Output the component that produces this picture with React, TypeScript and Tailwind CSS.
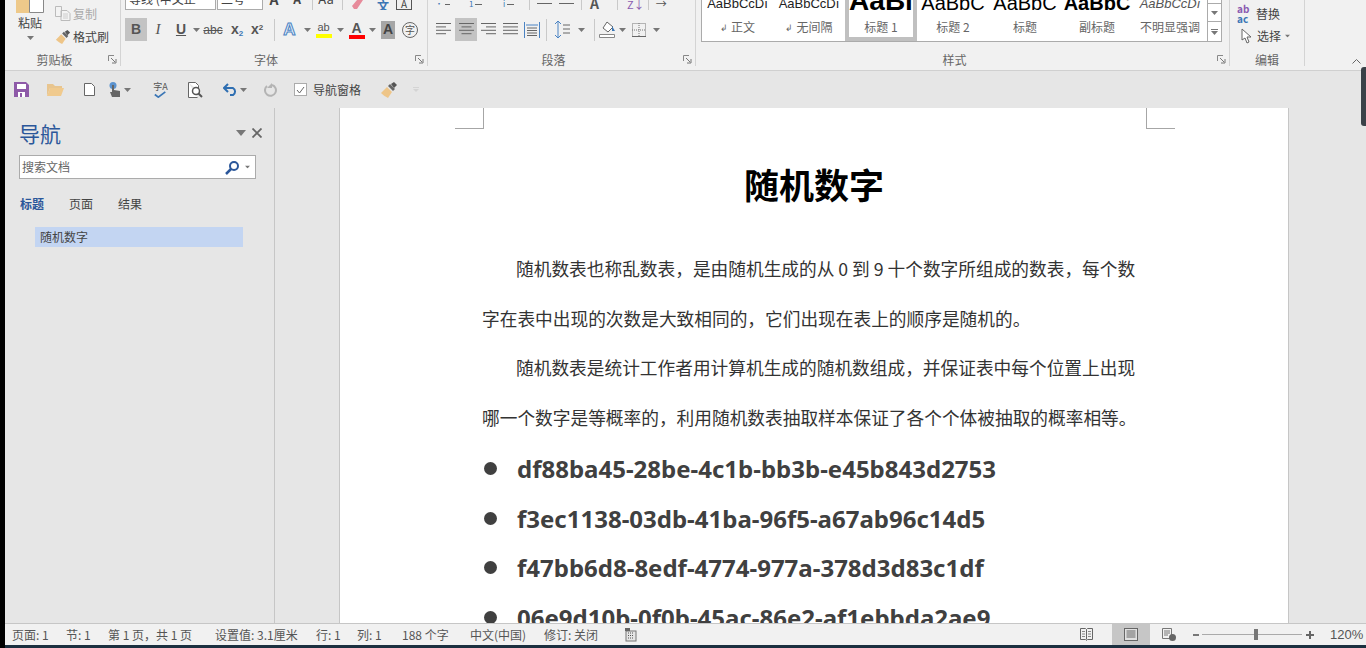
import type { ReactNode } from "react";

const cjk = { fontFamily: '"Noto Sans CJK SC", "Noto Sans", sans-serif' };

function Caret({ className = "" }: { className?: string }) {
  return (
    <svg width="7" height="4" viewBox="0 0 7 4" className={`flex-none ${className}`}>
      <path d="M0 0h7L3.5 4z" fill="#777" />
    </svg>
  );
}

function Launcher() {
  return (
    <svg width="9" height="9" viewBox="0 0 9 9" className="absolute right-[3px] bottom-[2px]">
      <path d="M.5 6V.5H6" fill="none" stroke="#888" />
      <path d="M3 3l4 4M8 4v4H4" fill="none" stroke="#777" />
    </svg>
  );
}

function Group({ width, label, launcher = true, children }: { width: string; label: string; launcher?: boolean; children: ReactNode }) {
  return (
    <div className={`flex h-[66px] flex-none flex-col border-r border-[#d4d4d4] ${width}`}>
      <div className="h-[51px] overflow-hidden">{children}</div>
      <div className={`relative flex h-[15px] items-center justify-center pt-[2px] text-[12px] leading-none text-[#666] ${launcher ? "pr-[16px]" : ""}`}>
        {label}
        {launcher && <Launcher />}
      </div>
    </div>
  );
}

function Sep({ className = "" }: { className?: string }) {
  return <div className={`h-[22px] w-px flex-none bg-[#c9c9c9] ${className}`} />;
}

function Brush({ size = 18 }: { size?: number }) {
  return (
    <svg width={size} height={size} viewBox="0 0 18 18">
      <path d="M1 12l6-6 5 5-4 6c-2-1-5-3-7-5z" fill="#eec588" />
      <path d="M8 5l2-2 5 5-2 2z" fill="#666" />
      <path d="M11 3l3-2 3 3-3 3z" fill="#555" />
    </svg>
  );
}

function AlignIcon({ widths, align }: { widths: number[]; align: "l" | "c" | "r" }) {
  return (
    <svg width="15" height="13" viewBox="0 0 15 13">
      {widths.map((w, i) => {
        const x = align === "l" ? 0 : align === "c" ? (15 - w) / 2 : 15 - w;
        return <rect key={i} x={x} y={i * 3.4} width={w} height="1" fill="#666" />;
      })}
    </svg>
  );
}

function Cell({ w, active, children }: { w: string; active?: boolean; children: ReactNode }) {
  return (
    <div className={`flex h-[23px] flex-none items-center justify-center ${w} ${active ? "bg-[#c3c3c3]" : ""}`}>
      {children}
    </div>
  );
}

function ClipboardGroup() {
  return (
    <Group width="w-[116px]" label="剪贴板">
      <div className="flex h-[51px]">
        <div className="flex w-[50px] flex-none flex-col items-center">
          <svg width="30" height="13" viewBox="0 0 30 13" className="flex-none">
            <rect x="1" y="0" width="13" height="13" fill="#eec98a" />
            <path d="M14.500 -2V12.500H28.500V-2" fill="#fff" stroke="#888" />
          </svg>
          <div className="mt-[2px] text-[12px] leading-[16px] text-[#444]">粘贴</div>
          <Caret className="mt-[5px]" />
        </div>
        <div className="flex flex-col pt-[5px]">
          <div className="flex h-[17px] items-center text-[12px] text-[#aaa]">
            <svg width="16" height="15" viewBox="0 0 16 15" className="mr-[2px]">
              <path d="M.5 .5h6v10h-6zM6 4.500h6l3 3v7H6z" fill="#f3f3f3" stroke="#bbb" />
              <path d="M8 8h5M8 10h5M8 12h5" stroke="#ccc" />
            </svg>
            复制
          </div>
          <div className="mt-[6px] flex h-[17px] items-center text-[12px] text-[#444]">
            <span className="mr-[2px] flex"><Brush size={16} /></span>
            格式刷
          </div>
        </div>
      </div>
    </Group>
  );
}

function FontGroup() {
  return (
    <Group width="w-[307px]" label="字体">
      <div className="flex h-[10px] items-end overflow-hidden pl-[4px] text-[12px] text-[#444]">
        <div className="flex h-[22px] w-[91px] flex-none items-center border border-[#ababab] bg-white pl-[3px] leading-none">等线 (中文正</div>
        <div className="ml-[1px] flex h-[22px] w-[46px] flex-none items-center border border-[#ababab] bg-white pl-[3px] leading-none">二号</div>
        <div className="ml-[3px] flex h-[22px] w-[16px] items-center justify-center font-bold text-[14px]">A</div>
        <div className="ml-[7px] flex h-[22px] w-[16px] items-center justify-center font-bold text-[12px]">A</div>
        <Sep className="ml-[7px]" />
        <div className="ml-[1px] flex h-[22px] w-[24px] items-center justify-center text-[13px]">Aa</div>
        <Sep className="ml-[4px]" />
        <svg width="16" height="10" viewBox="0 0 16 10" className="ml-[8px] flex-none">
          <path d="M1 6l5-6h6l-6 9H3z" fill="#e78b9b" />
        </svg>
        <div className="ml-[8px] w-[16px] text-center font-bold leading-[8px] text-[#3b76b5]">文</div>
        <div className="ml-[5px] h-[10px] w-[16px] border-x border-b border-[#555] text-center text-[10px] leading-[8px]">A</div>
      </div>
      <div className="mt-[8px] flex items-center pl-[4px] text-[#555]" style={{ fontFamily: '"Liberation Sans", sans-serif' }}>
        <Cell w="w-[22px]" active><span className="text-[14px] font-bold">B</span></Cell>
        <Cell w="w-[22px]"><span className="font-['Liberation_Serif'] text-[15px] italic">I</span></Cell>
        <Cell w="w-[24px]"><span className="text-[14px] font-bold underline">U</span></Cell>
        <Caret />
        <Cell w="w-[26px]"><span className="text-[12px] line-through">abc</span></Cell>
        <Cell w="w-[22px]"><span className="text-[14px] font-bold">x<sub className="text-[8px] text-[#3b76b5]">2</sub></span></Cell>
        <Cell w="w-[18px]"><span className="text-[14px] font-bold">x<sup className="text-[8px]">2</sup></span></Cell>
        <Sep className="ml-[8px]" />
        <Cell w="w-[29px]"><span className="text-[17px] font-bold text-[#e8f0fa] [-webkit-text-stroke:1px_#4a83c3]">A</span></Cell>
        <Caret />
        <Cell w="w-[25px]">
          <div className="flex flex-col items-center">
            <span className="text-[11px] leading-[13px]">ab</span>
            <div className="h-[4px] w-[16px] bg-[#ffff00]" />
          </div>
        </Cell>
        <Caret className="ml-[1px]" />
        <Cell w="w-[25px]">
          <div className="flex flex-col items-center">
            <span className="text-[14px] font-bold leading-[14px]">A</span>
            <div className="h-[4px] w-[16px] bg-[#ff0000]" />
          </div>
        </Cell>
        <Caret />
        <div className="ml-[5px] flex h-[18px] w-[14px] flex-none items-center justify-center bg-[#a6a6a6] text-[14px] font-bold text-[#444]">A</div>
        <div className="ml-[7px] flex h-[16px] w-[16px] flex-none items-center justify-center rounded-full border border-[#666] text-[10px] leading-none" style={cjk}>字</div>
      </div>
    </Group>
  );
}

function ParagraphGroup() {
  return (
    <Group width="w-[268px]" label="段落">
      <div className="flex h-[10px] items-start pl-[7px]">
        {["•", "1", "i"].map((mark, i) => (
          <div key={mark} className={`flex w-[15px] items-center text-[8px] leading-[8px] text-[#3b76b5] ${i === 0 ? "" : "ml-[19px]"}`}>
            {mark}
            <div className="ml-[2px] h-px w-[7px] bg-[#666]" />
          </div>
        ))}
        <div className="ml-[11px] h-[10px] w-px bg-[#c9c9c9]" />
        <div className="ml-[7px] mt-[3px] h-px w-[15px] bg-[#666]" />
        <div className="ml-[7px] mt-[3px] h-px w-[15px] bg-[#666]" />
        <div className="ml-[7px] h-[10px] w-px bg-[#c9c9c9]" />
        <div className="ml-[8px] text-[14px] font-bold leading-[7px] text-[#555]">A</div>
        <div className="ml-[18px] h-[10px] w-px bg-[#c9c9c9]" />
        <div className="ml-[9px] text-[11px] leading-[8px] text-[#8a5bb0]">Z↓</div>
        <div className="ml-[3px] h-[10px] w-px bg-[#c9c9c9]" />
        <div className="ml-[7px] text-[11px] leading-[6px] text-[#555]">→</div>
      </div>
      <div className="mt-[8px] flex items-center pl-[4px]">
        <Cell w="w-[23px]"><AlignIcon widths={[15, 10, 15, 10]} align="l" /></Cell>
        <Cell w="w-[22px]" active><AlignIcon widths={[15, 10, 15, 10]} align="c" /></Cell>
        <Cell w="w-[22px]"><AlignIcon widths={[15, 10, 15, 10]} align="r" /></Cell>
        <Cell w="w-[22px]"><AlignIcon widths={[15, 15, 15, 15]} align="l" /></Cell>
        <Cell w="w-[22px]">
          <svg width="16" height="16" viewBox="0 0 16 16">
            <path d="M.5 0v16M15.500 0v16M2 3h12" stroke="#4a83c3" fill="none" />
            <path d="M3 6h10M3 8.500h10M3 11h10M3 13.500h10" stroke="#666" />
          </svg>
        </Cell>
        <Sep className="ml-[3px]" />
        <Cell w="w-[31px]">
          <svg width="15" height="17" viewBox="0 0 15 17">
            <path d="M3 0v17M0 3l3-3 3 3M0 14l3 3 3-3" stroke="#4a83c3" fill="none" />
            <path d="M8 4h7M8 8h7M8 12h7" stroke="#666" />
          </svg>
        </Cell>
        <Caret className="mr-[9px]" />
        <Sep />
        <Cell w="w-[23px]">
          <svg width="16" height="17" viewBox="0 0 16 17">
            <path d="M8 1l6 5-5 5-5-4z" fill="#fff" stroke="#666" />
            <path d="M13 5l3 5h-3z" fill="#3b76b5" />
            <path d="M.5 13.500h15v3H.5z" fill="#fff" stroke="#888" />
          </svg>
        </Cell>
        <Caret className="ml-[1px]" />
        <Cell w="w-[26px]">
          <svg width="14" height="14" viewBox="0 0 14 14">
            <rect x=".5" y=".5" width="13" height="13" fill="none" stroke="#777" strokeDasharray="1 1" />
            <path d="M0 7h14M7 0v14" stroke="#777" strokeDasharray="1 1" />
            <path d="M0 13.500h14" stroke="#666" />
          </svg>
        </Cell>
        <Caret className="ml-[1px]" />
      </div>
    </Group>
  );
}

const styleItems = [
  { sample: "AaBbCcDı", name: "正文", mark: true, cls: "text-[13px] text-[#222]", pad: "pb-[8px]", w: "w-[71px]" },
  { sample: "AaBbCcDı", name: "无间隔", mark: true, cls: "text-[13px] text-[#222]", pad: "pb-[8px]", w: "w-[72px]" },
  { sample: "AaBl", name: "标题 1", cls: "text-[28px] font-bold text-black", pad: "pb-[3px]", w: "w-[72px]", selected: true },
  { sample: "AaBbC", name: "标题 2", cls: "text-[20px] text-black", pad: "pb-[5px]", w: "w-[72px]" },
  { sample: "AaBbC", name: "标题", cls: "text-[20px] text-black", pad: "pb-[5px]", w: "w-[72px]" },
  { sample: "AaBbC", name: "副标题", cls: "text-[20px] font-bold text-black", pad: "pb-[5px]", w: "w-[72px]" },
  { sample: "AaBbCcDı", name: "不明显强调", cls: "text-[13px] italic text-[#555]", pad: "pb-[8px]", w: "w-[74px]" },
];

function StylesGroup() {
  return (
    <Group width="w-[534px]" label="样式">
      <div className="flex h-[42px] pl-[5px]">
        <div className="flex h-[42px] w-[507px] flex-none border-x border-b border-[#ababab] bg-white">
          {styleItems.map((item) => (
            <div
              key={item.name}
              className={`flex h-[41px] flex-none flex-col items-center overflow-hidden ${item.w} ${item.selected ? "border-x-4 border-b-4 border-[#c0c0c0]" : ""}`}
            >
              <div className={`flex h-[18px] w-full flex-none items-end justify-center overflow-hidden ${item.pad}`}>
                <span className={`whitespace-nowrap leading-none ${item.cls}`} style={{ fontFamily: '"Liberation Sans", sans-serif' }}>{item.sample}</span>
              </div>
              <div className="flex h-[18px] flex-none items-center text-[12px] leading-none text-[#666]">
                {item.mark && <span className="mr-[3px] text-[9px]">↲</span>}
                {item.name}
              </div>
            </div>
          ))}
        </div>
        <div className="flex w-[14px] flex-none flex-col border-r border-b border-[#ababab] bg-white">
          <div className="h-[4px] border-b border-[#ababab]" />
          <div className="flex h-[18px] items-center justify-center border-b border-[#ababab]"><Caret /></div>
          <div className="flex h-[19px] flex-col items-center justify-center">
            <div className="mb-[1px] h-px w-[7px] bg-[#777]" />
            <Caret />
          </div>
        </div>
      </div>
    </Group>
  );
}

function EditGroup() {
  return (
    <Group width="w-[75px]" label="编辑" launcher={false}>
      <div className="flex flex-col pl-[7px] pt-[4px] text-[12px] text-[#444]">
        <div className="flex h-[19px] items-center">
          <span className="mr-[3px] w-[16px] text-[10px] font-bold leading-[10px]">
            <span className="block text-[#8a5bb0]">ab</span>
            <span className="block text-[#3b76b5]">ac</span>
          </span>
          替换
        </div>
        <div className="mt-[3px] flex h-[19px] items-center">
          <svg width="13" height="16" viewBox="0 0 13 16" className="ml-[4px] mr-[3px]">
            <path d="M1 1v11l3-2 2 5 2-1-2-5h4z" fill="#fff" stroke="#666" />
          </svg>
          选择
          <Caret className="ml-[3px] scale-75" />
        </div>
      </div>
    </Group>
  );
}

function QuickAccess() {
  return (
    <div className="flex h-[37px] flex-none items-center bg-[#e6e6e6] pl-[9px] text-[12px] text-[#444]">
      <svg width="15" height="15" viewBox="0 0 15 15">
        <path d="M0 0h12l3 3v12H0z" fill="#8e5aa8" />
        <rect x="3" y="2" width="9" height="5" fill="#fff" />
        <rect x="4" y="10" width="7" height="5" fill="#fff" />
        <rect x="6" y="11" width="2" height="4" fill="#8e5aa8" />
      </svg>
      <svg width="17" height="13" viewBox="0 0 17 13" className="ml-[18px]">
        <path d="M0 1h6l2 2h7v2H3L0 13z" fill="#e8c58f" />
        <path d="M3 5h14l-3 8H0z" fill="#f0ca8e" />
      </svg>
      <svg width="11" height="13" viewBox="0 0 11 13" className="ml-[20px]">
        <path d="M.5 .5h7l3 3v9h-10z" fill="#fff" stroke="#666" />
      </svg>
      <svg width="12" height="15" viewBox="0 0 12 15" className="ml-[14px]">
        <circle cx="4" cy="3.500" r="3.500" fill="#5b93cf" />
        <path d="M3 3h2v5l6 1v6H3L1 10l2 0z" fill="#666" />
      </svg>
      <Caret className="ml-[3px]" />
      <div className="relative ml-[21px] flex h-[16px] w-[17px] flex-col items-center text-[9px] leading-[9px] text-[#555]">
        字A
        <svg width="15" height="8" viewBox="0 0 15 8"><path d="M1 4l4 3 8-6" fill="none" stroke="#3b76b5" strokeWidth="2" /></svg>
      </div>
      <svg width="15" height="16" viewBox="0 0 15 16" className="ml-[19px]">
        <path d="M.5 .5h7l3 3v5M.5 .5v15h9" fill="#fff" stroke="#666" />
        <circle cx="8" cy="9" r="3.500" fill="#fff" stroke="#555" strokeWidth="1.500" />
        <path d="M10.500 11.500l3.500 3.500" stroke="#555" strokeWidth="2" />
      </svg>
      <svg width="15" height="13" viewBox="0 0 15 13" className="ml-[20px]">
        <path d="M1 5h9a4 4 0 010 7H7" fill="none" stroke="#2f6fb2" strokeWidth="2" />
        <path d="M5 1L1 5l4 4" fill="none" stroke="#2f6fb2" strokeWidth="2" />
      </svg>
      <Caret className="ml-[2px]" />
      <svg width="13" height="14" viewBox="0 0 13 14" className="ml-[17px]">
        <path d="M3 3a5.500 5.500 0 105-1" fill="none" stroke="#b4b4b4" strokeWidth="2" />
        <path d="M8 0v5H3" fill="#b4b4b4" />
      </svg>
      <div className="ml-[17px] flex h-[13px] w-[13px] flex-none items-center justify-center border border-[#ababab] bg-white">
        <svg width="9" height="8" viewBox="0 0 9 8"><path d="M1 4l2.500 3L8 1" fill="none" stroke="#666" /></svg>
      </div>
      <span className="ml-[6px] leading-none">导航窗格</span>
      <span className="ml-[19px] flex"><Brush /></span>
      <div className="ml-[15px] flex flex-col items-center">
        <div className="mb-[1px] h-px w-[6px] bg-[#d4d4d4]" />
        <svg width="6" height="3" viewBox="0 0 6 3"><path d="M0 0h6L3 3z" fill="#d4d4d4" /></svg>
      </div>
    </div>
  );
}

function NavPane() {
  return (
    <aside className="flex w-[270px] flex-none flex-col border-r border-[#c6c6c6] bg-[#e6e6e6] pl-[14px]">
      <div className="mt-[12px] flex h-[26px] items-center pr-[12px]">
        <span className="text-[21px] leading-none text-[#2b579a]">导航</span>
        <svg width="10" height="6" viewBox="0 0 10 6" className="ml-auto"><path d="M0 0h10L5 6z" fill="#777" /></svg>
        <svg width="10" height="10" viewBox="0 0 10 10" className="ml-[6px]"><path d="M.5 .5l9 9M9.500 .5l-9 9" stroke="#666" strokeWidth="1.800" /></svg>
      </div>
      <div className="mt-[9px] flex h-[24px] w-[237px] items-center border border-[#ababab] bg-white pl-[2px] text-[12px] text-[#666]">
        搜索文档
        <svg width="15" height="15" viewBox="0 0 15 15" className="ml-auto">
          <circle cx="9" cy="6" r="4" fill="none" stroke="#2b579a" strokeWidth="2" />
          <path d="M6 9l-5 5" stroke="#2b579a" strokeWidth="2.500" />
        </svg>
        <Caret className="ml-[4px] mr-[4px] scale-75" />
      </div>
      <div className="mt-[16px] flex h-[18px] items-center pl-[1px] text-[12px] text-[#444]">
        <span className="w-[49px] font-bold text-[#2b579a]">标题</span>
        <span className="w-[49px]">页面</span>
        <span>结果</span>
      </div>
      <div className="ml-[16px] mt-[14px] flex h-[20px] w-[208px] items-center bg-[#c3d5f2] pl-[5px] text-[12px] text-[#444]">随机数字</div>
    </aside>
  );
}

const uuids = [
  "df88ba45-28be-4c1b-bb3b-e45b843d2753",
  "f3ec1138-03db-41ba-96f5-a67ab96c14d5",
  "f47bb6d8-8edf-4774-977a-378d3d83c1df",
  "06e9d10b-0f0b-45ac-86e2-af1ebbda2ae9",
];

function Page() {
  return (
    <main className="flex-1 overflow-hidden bg-[#e6e6e6] pl-[64px]">
      <div className="h-full w-[950px] overflow-hidden border-x border-[#c6c6c6] bg-white">
        <div className="flex h-[21px] justify-between pl-[115px] pr-[113px]">
          <div className="h-[21px] w-[29px] border-r border-b border-[#a6a6a6]" />
          <div className="h-[21px] w-[29px] border-l border-b border-[#a6a6a6]" />
        </div>
        <h1 className="mt-[32px] h-[46px] text-center text-[35px] font-bold leading-[46px] text-black">随机数字</h1>
        <div className="mt-[37px] pl-[142px] text-[17.700px] leading-[49.500px] text-[#333]">
          <p className="whitespace-nowrap pl-[34px]">随机数表也称乱数表，是由随机生成的从 0 到 9 十个数字所组成的数表，每个数</p>
          <p className="whitespace-nowrap">字在表中出现的次数是大致相同的，它们出现在表上的顺序是随机的。</p>
          <p className="whitespace-nowrap pl-[34px]">随机数表是统计工作者用计算机生成的随机数组成，并保证表中每个位置上出现</p>
          <p className="whitespace-nowrap">哪一个数字是等概率的，利用随机数表抽取样本保证了各个个体被抽取的概率相等。</p>
        </div>
        <ul className="mt-[2px] pl-[144px] text-[24px] font-bold leading-[49.500px] text-[#404040]" style={{ fontFamily: '"Noto Sans", sans-serif' }}>
          {uuids.map((id) => (
            <li key={id} className="flex items-center">
              <span className="mr-[20px] h-[13px] w-[13px] flex-none rounded-full bg-[#404040]" />
              {id}
            </li>
          ))}
        </ul>
      </div>
    </main>
  );
}

function StatusBar() {
  const left: [string, string][] = [
    ["页面: 1", "w-[54px]"],
    ["节: 1", "w-[42px]"],
    ["第 1 页，共 1 页", "w-[107px]"],
    ["设置值: 3.1厘米", "w-[101px]"],
    ["行: 1", "w-[41px]"],
    ["列: 1", "w-[45px]"],
    ["188 个字", "w-[68px]"],
    ["中文(中国)", "w-[74px]"],
    ["修订: 关闭", "w-[81px]"],
  ];
  return (
    <footer className="relative flex h-[22px] flex-none items-center border-t border-[#c6c6c6] bg-[#f1f1f1] pl-[7px] text-[12px] text-[#555]">
      {left.map(([text, w]) => (
        <span key={text} className={`flex-none whitespace-nowrap leading-none ${w}`}>{text}</span>
      ))}
      <svg width="12" height="14" viewBox="0 0 12 14">
        <rect x="1" y="3" width="10" height="10" fill="#e6e6e6" stroke="#777" />
        <path d="M3 5h6M3 7.500h6M3 10h6" stroke="#555" strokeDasharray="1 1" />
        <path d="M0 0h5v3H0z" fill="#666" />
      </svg>
      <div className="ml-auto flex h-full items-center">
        <svg width="13" height="13" viewBox="0 0 13 13">
          <path d="M.5 .5h5l1 1 1-1h5v11h-5l-1 1-1-1h-5zM6.500 1.500v10" fill="none" stroke="#666" />
          <path d="M2 3.500h3M2 6h3M2 8.500h3M8 3.500h3M8 6h3M8 8.500h3" stroke="#888" />
        </svg>
        <div className="ml-[19px] flex h-full w-[38px] items-center justify-center bg-[#c6c6c6]">
          <svg width="14" height="13" viewBox="0 0 14 13">
            <rect x=".5" y=".5" width="13" height="12" fill="#e0e0e0" stroke="#666" />
            <path d="M2.500 3h9M2.500 5h9M2.500 7h9M2.500 9h9" stroke="#666" />
          </svg>
        </div>
        <svg width="14" height="13" viewBox="0 0 14 13" className="ml-[12px]">
          <path d="M.5 .5h9v10h-9z" fill="none" stroke="#777" />
          <path d="M2 3h6M2 5h6M2 7h4" stroke="#777" />
          <circle cx="10.500" cy="9.500" r="3.500" fill="#666" />
        </svg>
        <div className="ml-[17px] h-[2px] w-[6px] bg-[#777]" />
        <div className="relative ml-[3px] flex h-full w-[100px] items-center">
          <div className="h-px w-full bg-[#aaa]" />
          <div className="absolute left-[52px] h-[11px] w-[4px] bg-[#777]" />
        </div>
        <div className="relative ml-[4px] h-[8px] w-[8px]">
          <div className="absolute top-[3px] h-[2px] w-[8px] bg-[#666]" />
          <div className="absolute left-[3px] h-[8px] w-[2px] bg-[#666]" />
        </div>
        <span className="ml-[16px] mr-[3px] w-[33px] text-[13px] leading-none" style={{ fontFamily: '"Liberation Sans", sans-serif' }}>120%</span>
      </div>
    </footer>
  );
}

export default function App() {
  return (
    <div className="relative flex h-[648px] w-[1366px] overflow-hidden bg-black" style={cjk}>
      <div className="w-[5px] flex-none bg-black" />
      <div className="flex min-w-0 flex-1 flex-col">
        <header className="flex h-[71px] flex-none border-b border-[#d0d0d0] bg-[#f1f1f1]">
          <ClipboardGroup />
          <FontGroup />
          <ParagraphGroup />
          <StylesGroup />
          <EditGroup />
          <div className="flex flex-1 items-start justify-end pr-[5px] pt-[59px]">
            <svg width="9" height="5" viewBox="0 0 9 5"><path d="M.5 4.500l4-4 4 4" fill="none" stroke="#666" /></svg>
          </div>
        </header>
        <QuickAccess />
        <div className="flex min-h-0 flex-1">
          <NavPane />
          <Page />
        </div>
        <StatusBar />
        <div className="flex h-[3px] flex-none bg-[#1b2f3f]" />
      </div>
      <div className="absolute right-0 top-[67px] h-[59px] w-[5px] rounded-l-[3px] bg-[#3a4148]" />
    </div>
  );
}
